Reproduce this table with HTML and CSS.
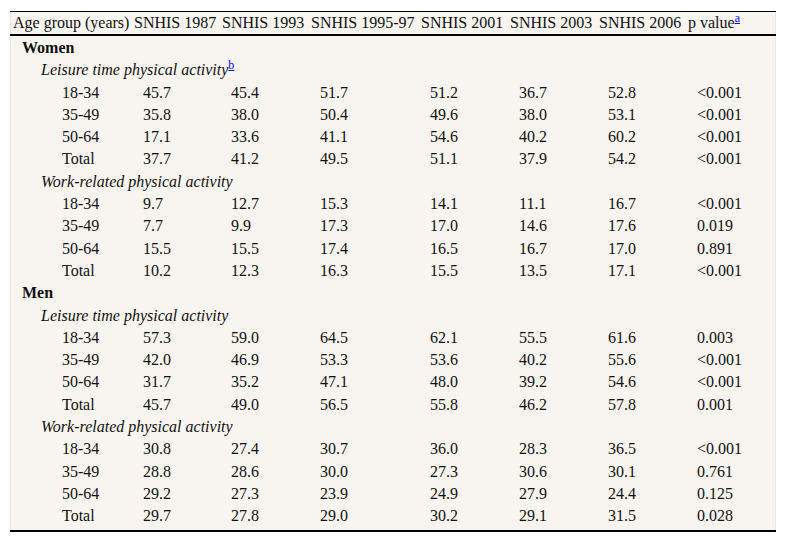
FILE: index.html
```html
<!DOCTYPE html>
<html lang="en">
<head>
<meta charset="utf-8">
<title>Physical activity table</title>
<link rel="stylesheet" href="styles.css">
</head>
<body>
<div class="panel">
<table class="data">
<colgroup>
<col class="c0"><col class="c1"><col class="c2"><col class="c3"><col class="c4"><col class="c5"><col class="c6"><col class="c7">
</colgroup>
<thead>
<tr><th>Age group (years)</th><th>SNHIS 1987</th><th>SNHIS 1993</th><th>SNHIS 1995-97</th><th>SNHIS 2001</th><th>SNHIS 2003</th><th>SNHIS 2006</th><th>p value<sup><a href="#a">a</a></sup></th></tr>
</thead>
<tbody>
<tr class="first"><td class="sex" colspan="8">Women</td></tr>
<tr><td class="cat" colspan="8">Leisure time physical activity<sup><a href="#b">b</a></sup></td></tr>
<tr><td class="age">18-34</td><td>45.7</td><td>45.4</td><td>51.7</td><td>51.2</td><td>36.7</td><td>52.8</td><td>&lt;0.001</td></tr>
<tr><td class="age">35-49</td><td>35.8</td><td>38.0</td><td>50.4</td><td>49.6</td><td>38.0</td><td>53.1</td><td>&lt;0.001</td></tr>
<tr><td class="age">50-64</td><td>17.1</td><td>33.6</td><td>41.1</td><td>54.6</td><td>40.2</td><td>60.2</td><td>&lt;0.001</td></tr>
<tr><td class="age">Total</td><td>37.7</td><td>41.2</td><td>49.5</td><td>51.1</td><td>37.9</td><td>54.2</td><td>&lt;0.001</td></tr>
<tr><td class="cat" colspan="8">Work-related physical activity</td></tr>
<tr><td class="age">18-34</td><td>9.7</td><td>12.7</td><td>15.3</td><td>14.1</td><td>11.1</td><td>16.7</td><td>&lt;0.001</td></tr>
<tr><td class="age">35-49</td><td>7.7</td><td>9.9</td><td>17.3</td><td>17.0</td><td>14.6</td><td>17.6</td><td>0.019</td></tr>
<tr><td class="age">50-64</td><td>15.5</td><td>15.5</td><td>17.4</td><td>16.5</td><td>16.7</td><td>17.0</td><td>0.891</td></tr>
<tr><td class="age">Total</td><td>10.2</td><td>12.3</td><td>16.3</td><td>15.5</td><td>13.5</td><td>17.1</td><td>&lt;0.001</td></tr>
<tr><td class="sex" colspan="8">Men</td></tr>
<tr><td class="cat" colspan="8">Leisure time physical activity</td></tr>
<tr><td class="age">18-34</td><td>57.3</td><td>59.0</td><td>64.5</td><td>62.1</td><td>55.5</td><td>61.6</td><td>0.003</td></tr>
<tr><td class="age">35-49</td><td>42.0</td><td>46.9</td><td>53.3</td><td>53.6</td><td>40.2</td><td>55.6</td><td>&lt;0.001</td></tr>
<tr><td class="age">50-64</td><td>31.7</td><td>35.2</td><td>47.1</td><td>48.0</td><td>39.2</td><td>54.6</td><td>&lt;0.001</td></tr>
<tr><td class="age">Total</td><td>45.7</td><td>49.0</td><td>56.5</td><td>55.8</td><td>46.2</td><td>57.8</td><td>0.001</td></tr>
<tr><td class="cat" colspan="8">Work-related physical activity</td></tr>
<tr><td class="age">18-34</td><td>30.8</td><td>27.4</td><td>30.7</td><td>36.0</td><td>28.3</td><td>36.5</td><td>&lt;0.001</td></tr>
<tr><td class="age">35-49</td><td>28.8</td><td>28.6</td><td>30.0</td><td>27.3</td><td>30.6</td><td>30.1</td><td>0.761</td></tr>
<tr><td class="age">50-64</td><td>29.2</td><td>27.3</td><td>23.9</td><td>24.9</td><td>27.9</td><td>24.4</td><td>0.125</td></tr>
<tr><td class="age">Total</td><td>29.7</td><td>27.8</td><td>29.0</td><td>30.2</td><td>29.1</td><td>31.5</td><td>0.028</td></tr>
</tbody>
</table>
</div>
</body>
</html>
```
FILE: styles.css
```css
html, body {
  margin: 0;
  padding: 0;
  background: #ffffff;
}
body {
  font-family: "Liberation Serif", "Times New Roman", serif;
  font-size: 16px;
  color: #111111;
}
.panel {
  margin: 11px 0 0 10px;
  width: 766px;
  background: #f8f5f0;
  border-bottom: 2px solid #000;
  padding-bottom: 2px;
  box-shadow: inset 1px 0 0 #ebe8e3, inset -1px 0 0 #ebe8e3;
}
.data {
  width: 766px;
  table-layout: fixed;
  border-collapse: collapse;
}
.c0 { width: 121px; }
.c1 { width: 88px; }
.c2 { width: 89px; }
.c3 { width: 110px; }
.c4 { width: 89px; }
.c5 { width: 89px; }
.c6 { width: 89px; }
.c7 { width: 91px; }
.data thead tr {
  border-top: 1px solid #000;
  border-bottom: 2px solid #000;
}
.data th {
  font-weight: normal;
  text-align: left;
  white-space: nowrap;
  padding: 2px 0 2px 3px;
  line-height: 18px;
}
.data td {
  text-align: left;
  white-space: nowrap;
  padding: 2px 0 2px 12px;
  line-height: 18.3px;
}
.data tr.first td {
  padding-top: 3px;
}
.data td.sex {
  font-weight: bold;
  padding-left: 12px;
}
.data td.cat {
  font-style: italic;
  padding-left: 31px;
}
.data td.age {
  padding-left: 52px;
}
sup {
  font-size: 12px;
  font-style: normal;
  line-height: 0;
  vertical-align: 6px;
}
sup a {
  color: #0000ee;
  text-decoration: underline;
}
```
